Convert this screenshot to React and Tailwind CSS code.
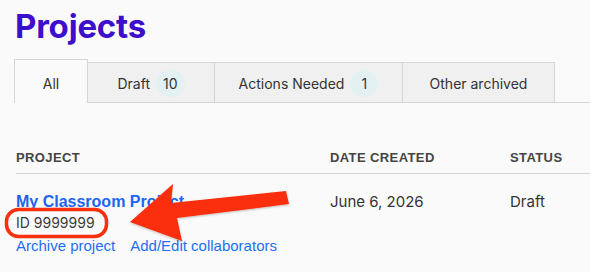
import {Fragment} from "react";

const tabs = [
    {label: "All", active: true, w: "w-[74px]"},
    {label: "Draft", count: 10, w: "w-[127px]"},
    {label: "Actions Needed", count: 1, w: "w-[188px]"},
    {label: "Other archived", w: "w-[152px]"},
];

const Arrow = () => (
    <svg className="absolute left-0 top-0 pointer-events-none" width="590" height="272" viewBox="0 0 590 272">
        <defs>
            <filter id="arrowShadow" x="-10%" y="-10%" width="120%" height="130%">
                <feDropShadow dx="0" dy="1" stdDeviation="1" floodColor="#000" floodOpacity="0.25" />
            </filter>
        </defs>
        <rect x="6.5" y="209.5" width="100" height="27" rx="12" fill="none" stroke="#f9300f" strokeWidth="3.5" />
        <polygon
            filter="url(#arrowShadow)"
            fill="#fb2d0c"
            points="130,222 173,184 171,203 286,191 289,204 177,218 182,241"
        />
    </svg>
);

const App = () => {
    return (
        <div className="relative w-[590px] h-[272px] overflow-hidden bg-[#fafafa] font-['Inter',sans-serif] text-[#333]">
            <h1 className="pl-[15px] pt-[3px] h-[59px] text-[33px] leading-[46px] font-bold text-[#3d0ecb] tracking-[-0.2px]">
                Projects
            </h1>

            <div className="flex items-end pl-[14px]">
                {tabs.map((t) => (
                    <div
                        key={t.label}
                        className={
                            t.active
                                ? `${t.w} h-[44px] pt-[3px] flex items-center justify-center border border-b-0 border-[#d6d6d6] bg-[#fafafa] text-[14px]`
                                : `${t.w} h-[41px] pt-[1px] flex items-center justify-center gap-[6px] border-t border-r border-b border-[#d6d6d6] bg-[#f0f0f0] text-[14px]`
                        }
                    >
                        <span>{t.label}</span>
                        {t.count !== undefined && (
                            <span className="min-w-[28px] h-[27px] px-[7px] rounded-full bg-[#e3f1f3] flex items-center justify-center">
                                {t.count}
                            </span>
                        )}
                    </div>
                ))}
                <div className="flex-1 h-[1px] bg-[#d6d6d6]" />
            </div>

            <div className="pl-[16px] pt-[45px] font-['Liberation_Sans',sans-serif]">
                <div className="flex h-[26px] pt-[2px] border-b border-[#d4d4d4] text-[13px] font-bold text-[#444] tracking-[0.4px] leading-[16px]">
                    <div className="w-[314px]">PROJECT</div>
                    <div className="w-[180px]">DATE CREATED</div>
                    <div>STATUS</div>
                </div>
                <div className="flex pt-[18px]">
                    <div className="w-[314px]">
                        <div className="text-[16px] font-bold text-[#1e64f0] leading-[20px]">My Classroom Project</div>
                        <div className="text-[14px] text-[#3a3a3a] leading-[22px] font-['Inter',sans-serif]">ID 9999999</div>
                        <div className="flex gap-[15px] pt-[2px] text-[15px] text-[#1e6ff0] leading-[20px]">
                            <span>Archive project</span>
                            <span>Add/Edit collaborators</span>
                        </div>
                    </div>
                    <div className="w-[180px] text-[15px] font-['Inter',sans-serif] leading-[20px]">June 6, 2026</div>
                    <div className="text-[15px] font-['Inter',sans-serif] leading-[20px]">Draft</div>
                </div>
            </div>

            <Arrow />
        </div>
    );
};

export default App;
